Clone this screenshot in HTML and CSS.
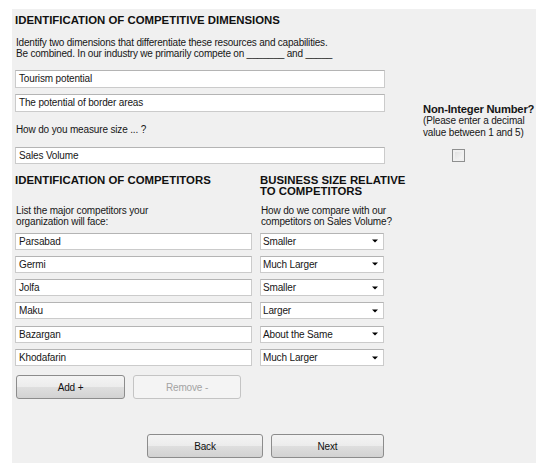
FILE: index.html
```html
<!DOCTYPE html>
<html>
<head>
<meta charset="utf-8">
<link rel="stylesheet" href="styles.css">
</head>
<body>
<div class="panel">
  <div class="main">
    <h1 class="heading">IDENTIFICATION OF COMPETITIVE DIMENSIONS</h1>
    <p class="intro">Identify two dimensions that differentiate these resources and capabilities.<br>Be combined. In our industry we primarily compete on _______ and _____</p>
    <div class="field first">Tourism potential</div>
    <div class="field">The potential of border areas</div>
    <p class="label">How do you measure size ... ?</p>
    <div class="field measure">Sales Volume</div>

    <div class="compgrid">
      <h2 class="heading sub">IDENTIFICATION OF COMPETITORS</h2>
      <h2 class="heading sub">BUSINESS SIZE RELATIVE<br>TO COMPETITORS</h2>
      <p class="text">List the major competitors your<br>organization will face:</p>
      <p class="text">How do we compare with our<br>competitors on Sales Volume?</p>

      <div class="field row">Parsabad</div>
      <div class="field row select"><span>Smaller</span><svg width="6" height="4" viewBox="0 0 6 4"><path d="M0 0.5H6L3 3.5Z" fill="#000"/></svg></div>
      <div class="field row">Germi</div>
      <div class="field row select"><span>Much Larger</span><svg width="6" height="4" viewBox="0 0 6 4"><path d="M0 0.5H6L3 3.5Z" fill="#000"/></svg></div>
      <div class="field row">Jolfa</div>
      <div class="field row select"><span>Smaller</span><svg width="6" height="4" viewBox="0 0 6 4"><path d="M0 0.5H6L3 3.5Z" fill="#000"/></svg></div>
      <div class="field row">Maku</div>
      <div class="field row select"><span>Larger</span><svg width="6" height="4" viewBox="0 0 6 4"><path d="M0 0.5H6L3 3.5Z" fill="#000"/></svg></div>
      <div class="field row">Bazargan</div>
      <div class="field row select"><span>About the Same</span><svg width="6" height="4" viewBox="0 0 6 4"><path d="M0 0.5H6L3 3.5Z" fill="#000"/></svg></div>
      <div class="field row">Khodafarin</div>
      <div class="field row select"><span>Much Larger</span><svg width="6" height="4" viewBox="0 0 6 4"><path d="M0 0.5H6L3 3.5Z" fill="#000"/></svg></div>
    </div>

    <div class="btnrow">
      <button class="btn add">Add +</button>
      <button class="btn remove" disabled>Remove -</button>
    </div>
    <div class="navrow">
      <button class="btn nav">Back</button>
      <button class="btn nav">Next</button>
    </div>
  </div>
  <aside class="side">
    <div class="side-title">Non-Integer Number?</div>
    <div class="side-text">(Please enter a decimal<br>value between 1 and 5)</div>
    <span class="checkbox"></span>
  </aside>
</div>
</body>
</html>
```

FILE: styles.css
```css
* { box-sizing: border-box; }
html, body { margin: 0; padding: 0; background: #ffffff; }
body {
  font-family: "Liberation Sans", Arial, sans-serif;
  font-size: 10px;
  color: #161616;
}
.panel {
  margin: 9px 0 0 12px;
  width: 524px;
  height: 454px;
  background: #f0f0f0;
  display: flex;
  padding-left: 3px;
}
.main {
  width: 370px;
  flex: none;
  display: flex;
  flex-direction: column;
}
.heading {
  margin: 0;
  font-size: 11.4px;
  font-weight: bold;
  line-height: 11px;
  color: #111;
  white-space: nowrap;
}
.main > .heading { margin-top: 5px; line-height: 12px; }
.intro {
  margin: 11px 0 0 1px;
  line-height: 11px;
  letter-spacing: -0.2px;
  white-space: nowrap;
}
.text, .label {
  margin: 0 0 0 1px;
  line-height: 11px;
  letter-spacing: -0.15px;
  white-space: nowrap;
}
.label { margin-top: 12px; }
.field {
  height: 18px;
  background: #fff;
  border: 1px solid #cbcbcb;
  border-top-color: #b4b4b4;
  padding: 0 3px;
  line-height: 16px;
  font-size: 10px;
  letter-spacing: -0.15px;
  margin-top: 6px;
  white-space: nowrap;
}
.field.first { margin-top: 11px; }
.field.measure { margin-top: 12px; height: 17px; line-height: 15px; }
.compgrid {
  margin-top: 11px;
  display: grid;
  grid-template-columns: 237px 124px;
  column-gap: 8px;
  row-gap: 6.3px;
}
.compgrid .sub { margin-bottom: 1.5px; }
.compgrid .text { margin-bottom: -0.5px; }
.field.row { margin: 0; height: 17px; line-height: 15px; }
.field.select {
  display: flex;
  align-items: center;
  justify-content: space-between;
  padding: 0 5px 0 2px;
}
.field.select svg { display: block; }
.btnrow {
  display: flex;
  gap: 8px;
  margin-top: 9px;
  padding-left: 1px;
}
.btn {
  font-family: "Liberation Sans", Arial, sans-serif;
  font-size: 10px;
  letter-spacing: -0.15px;
  color: #111;
  height: 24px;
  border: 1px solid #8c8c8c;
  border-radius: 3px;
  background: linear-gradient(#f4f4f4 0%, #ececec 48%, #dedede 52%, #d2d2d2 100%);
  padding: 0;
}
.btn.add { width: 109px; }
.btn.remove {
  width: 108px;
  color: #a3a3a3;
  border-color: #c4c4c4;
  background: #f4f4f4;
}
.navrow {
  display: flex;
  gap: 8px;
  margin-top: 35px;
  padding-left: 132px;
}
.btn.nav { width: 116px; }
.btn.nav + .btn.nav { width: 113px; }
.side {
  margin-left: 38px;
  padding-top: 94px;
  width: 113px;
  flex: none;
}
.side-title {
  font-size: 11.2px;
  font-weight: bold;
  line-height: 12px;
  letter-spacing: -0.2px;
  white-space: nowrap;
}
.side-text {
  line-height: 12px;
  letter-spacing: -0.15px;
  white-space: nowrap;
}
.checkbox {
  display: block;
  margin: 10px 0 0 29px;
  width: 13px;
  height: 13px;
  border: 1px solid #8e8f8f;
  background: linear-gradient(135deg, #dcdcdc, #fbfbfb);
  box-shadow: inset 0 0 0 2px #f0f0f0;
}
```
